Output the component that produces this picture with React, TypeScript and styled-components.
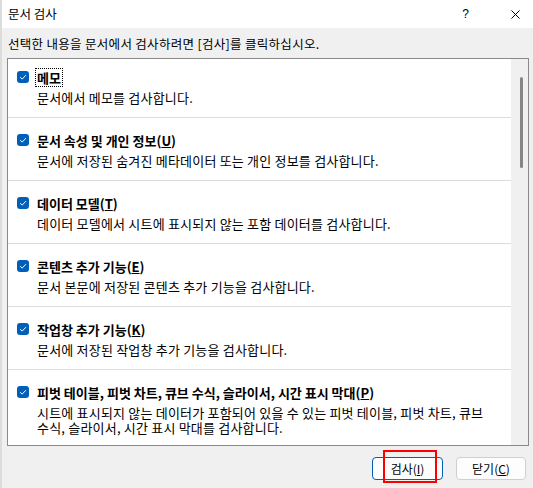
import React from 'react';
import styled, { createGlobalStyle } from 'styled-components';

const GlobalStyle = createGlobalStyle`
  html, body {
    margin: 0;
    padding: 0;
    background: #f0f0f0;
  }
  body {
    font-family: "Noto Sans CJK KR", "Noto Sans", sans-serif;
    font-size: 13px;
    color: #000;
  }
`;

const Dialog = styled.div`
    display: flex;
    flex-direction: column;
    width: 533px;
    height: 488px;
    box-sizing: border-box;
    border-left: 2px solid #dcdcdc;
    background: #f0f0f0;
    overflow: hidden;
`;

const TitleBar = styled.div`
    display: flex;
    align-items: center;
    height: 28px;
    padding: 0 0 0 6px;
    background: #fff;
`;

const TitleText = styled.div`
    flex: 1;
    font-size: 12.5px;
    line-height: 16px;
`;

const TitleButton = styled.div<{ $w: number }>`
    display: flex;
    align-items: center;
    justify-content: center;
    width: ${(p) => p.$w}px;
    height: 28px;
    font-family: "Liberation Sans", sans-serif;
    font-size: 12px;
`;

const Instruction = styled.div`
    height: 30px;
    padding: 8px 0 0 6px;
    box-sizing: border-box;
    font-size: 12.5px;
    letter-spacing: 0.3px;
    line-height: 16px;
`;

const ListBox = styled.div`
    display: flex;
    height: 388px;
    margin: 0 4px 0 5px;
    border: 1px solid #8a8a8a;
    background: #fff;
    box-sizing: border-box;
`;

const Rows = styled.div`
    flex: 1;
    overflow: hidden;
`;

const Row = styled.div<{ $first?: boolean }>`
    display: flex;
    flex-direction: column;
    gap: 4px;
    padding: ${(p) => (p.$first ? '9px' : '13px')} 8px 12px 9px;
    border-bottom: 1px solid #dcdcdc;
`;

const RowHead = styled.div`
    display: flex;
    align-items: center;
    gap: 7px;
    height: 18px;
`;

const Check = styled.div`
    display: flex;
    align-items: center;
    justify-content: center;
    width: 12px;
    height: 12px;
    border-radius: 3px;
    background: #005fb8;
`;

const Label = styled.span<{ $focused?: boolean }>`
    font-weight: 700;
    line-height: 17px;
    padding: 0 1px;
    outline: ${(p) => (p.$focused ? '1px dotted #000' : 'none')};
`;

const Desc = styled.div`
    padding-left: 20px;
    line-height: 15px;
    letter-spacing: 0.2px;
    word-break: keep-all;
`;

const ScrollTrack = styled.div`
    display: flex;
    justify-content: center;
    width: 17px;
    padding-top: 18px;
    background: #f0f0f0;
    box-sizing: border-box;
`;

const ScrollThumb = styled.div`
    width: 3px;
    height: 91px;
    margin-left: 3px;
    border-radius: 2px;
    background: #868686;
`;

const Footer = styled.div`
    display: flex;
    justify-content: flex-end;
    gap: 13px;
    padding: 11px 7px 0 0;
`;

const ButtonWrap = styled.div`
    position: relative;
`;

const Button = styled.button<{ $primary?: boolean }>`
    width: ${(p) => (p.$primary ? '71px' : '70px')};
    height: 23px;
    padding: 0;
    border: 1px solid ${(p) => (p.$primary ? '#005fb8' : '#d0d0d0')};
    border-radius: 4px;
    background: #fdfdfd;
    font-family: "Noto Sans CJK KR", "Noto Sans", sans-serif;
    font-size: 12px;
    color: #000;
`;

const Highlight = styled.div`
    position: absolute;
    left: 11px;
    top: -7px;
    width: 54px;
    height: 33px;
    border: 2px solid #ff0000;
    box-sizing: border-box;
    pointer-events: none;
`;

const CheckMark = () => (
    <svg width="12" height="12" viewBox="0 0 12 12">
        <path d="M3.2 6.2 L5.2 8.1 L8.9 4.2" fill="none" stroke="#fff" strokeWidth="1" />
    </svg>
);

const CloseIcon = () => (
    <svg width="9" height="9" viewBox="0 0 9 9">
        <path d="M0.5 0.5 L8.5 8.5 M8.5 0.5 L0.5 8.5" stroke="#000" strokeWidth="1" />
    </svg>
);

interface Item {
    title: string;
    key?: string;
    desc: string;
}

const items: Item[] = [
    { title: '메모', desc: '문서에서 메모를 검사합니다.' },
    { title: '문서 속성 및 개인 정보', key: 'U', desc: '문서에 저장된 숨겨진 메타데이터 또는 개인 정보를 검사합니다.' },
    { title: '데이터 모델', key: 'T', desc: '데이터 모델에서 시트에 표시되지 않는 포함 데이터를 검사합니다.' },
    { title: '콘텐츠 추가 기능', key: 'E', desc: '문서 본문에 저장된 콘텐츠 추가 기능을 검사합니다.' },
    { title: '작업창 추가 기능', key: 'K', desc: '문서에 저장된 작업창 추가 기능을 검사합니다.' },
    {
        title: '피벗 테이블, 피벗 차트, 큐브 수식, 슬라이서, 시간 표시 막대',
        key: 'P',
        desc: '시트에 표시되지 않는 데이터가 포함되어 있을 수 있는 피벗 테이블, 피벗 차트, 큐브 수식, 슬라이서, 시간 표시 막대를 검사합니다.',
    },
];

const App: React.FC = () => (
    <>
        <GlobalStyle />
        <Dialog>
            <TitleBar>
                <TitleText>문서 검사</TitleText>
                <TitleButton $w={63}>?</TitleButton>
                <TitleButton $w={36}>
                    <CloseIcon />
                </TitleButton>
            </TitleBar>
            <Instruction>선택한 내용을 문서에서 검사하려면 [검사]를 클릭하십시오.</Instruction>
            <ListBox>
                <Rows>
                    {items.map((item, i) => (
                        <Row key={item.title} $first={i === 0}>
                            <RowHead>
                                <Check>
                                    <CheckMark />
                                </Check>
                                <Label $focused={i === 0}>
                                    {item.title}
                                    {item.key && (
                                        <>
                                            (<u>{item.key}</u>)
                                        </>
                                    )}
                                </Label>
                            </RowHead>
                            <Desc>{item.desc}</Desc>
                        </Row>
                    ))}
                </Rows>
                <ScrollTrack>
                    <ScrollThumb />
                </ScrollTrack>
            </ListBox>
            <Footer>
                <ButtonWrap>
                    <Button $primary>
                        검사(<u>I</u>)
                    </Button>
                    <Highlight />
                </ButtonWrap>
                <ButtonWrap>
                    <Button>
                        닫기(<u>C</u>)
                    </Button>
                </ButtonWrap>
            </Footer>
        </Dialog>
    </>
);

export default App;
